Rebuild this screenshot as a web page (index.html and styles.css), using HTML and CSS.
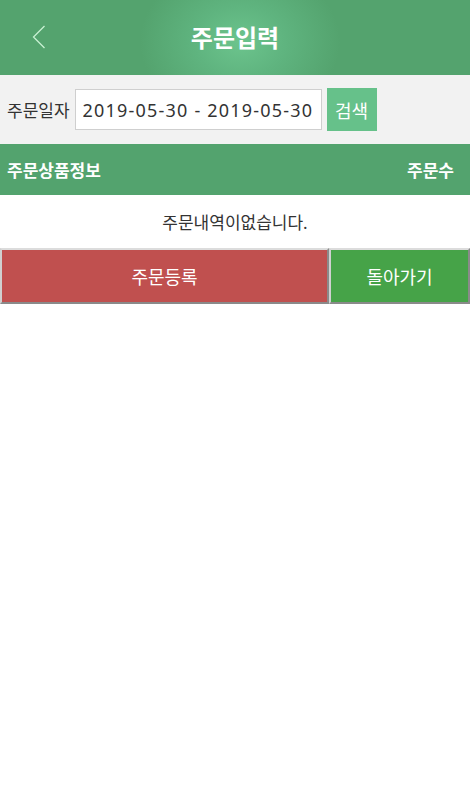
FILE: index.html
```html
<!DOCTYPE html>
<html lang="ko">
<head>
    <meta charset="UTF-8">
    <meta name="viewport" content="width=device-width, initial-scale=1.0">
    <title>주문입력</title>
    <link rel="stylesheet" href="styles.css">
</head>
<body>
    <div class="order-page">
        <header class="top-bar">
            <a class="back-btn" href="#">
                <svg width="14" height="26" viewBox="0 0 14 26">
                    <polyline points="12.5,1 1.5,12 12.5,23" fill="none" stroke="#c8f0d2" stroke-width="1.3"/>
                </svg>
            </a>
            <h1>주문입력</h1>
        </header>

        <div class="search-bar">
            <label for="orderDate">주문일자</label>
            <input type="text" id="orderDate" value="2019-05-30 - 2019-05-30">
            <button class="btn-search">검색</button>
        </div>

        <div class="list-head">
            <span>주문상품정보</span>
            <span>주문수</span>
        </div>
        <div class="list-empty">주문내역이없습니다.</div>

        <div class="actions">
            <button class="btn-order">주문등록</button>
            <button class="btn-back">돌아가기</button>
        </div>
    </div>
</body>
</html>
```

FILE: styles.css
```css
body {
    margin: 0;
    background: #ffffff;
    font-family: "Noto Sans", "Noto Sans CJK KR", sans-serif;
    color: #333;
}
.order-page {
    width: 470px;
}
.top-bar {
    position: relative;
    height: 75px;
    display: flex;
    align-items: center;
    justify-content: center;
    background: radial-gradient(ellipse 100px 80px at 240px 42px, #6cc48d 0%, #5fb47f 45%, #54a36e 100%);
}
.top-bar h1 {
    margin: 0;
    font-size: 24px;
    font-weight: bold;
    color: #ffffff;
    line-height: 1;
}
.back-btn {
    position: absolute;
    left: 32px;
    top: 25px;
    display: block;
    line-height: 0;
}
.search-bar {
    height: 69px;
    background: #f2f2f2;
    display: flex;
    align-items: center;
    padding: 0 7px;
    gap: 5px;
}
.search-bar label {
    font-size: 17px;
    color: #333;
}
.search-bar input {
    box-sizing: border-box;
    width: 247px;
    height: 41px;
    border: 1px solid #cfcfcf;
    background: #fff;
    padding: 0 7px;
    font-family: inherit;
    font-size: 18px;
    letter-spacing: 1.2px;
    color: #333;
    outline: none;
}
.btn-search {
    width: 50px;
    height: 43px;
    border: none;
    background: #66c18a;
    color: #ffffff;
    font-family: inherit;
    font-size: 18px;
    padding: 0;
}
.list-head {
    height: 51px;
    background: #53a36e;
    display: flex;
    align-items: center;
    justify-content: space-between;
    padding: 0 16px 0 7px;
    color: #fff;
    font-size: 17px;
    font-weight: bold;
}
.list-empty {
    height: 53px;
    display: flex;
    align-items: center;
    justify-content: center;
    font-size: 17px;
    color: #333;
}
.actions {
    display: flex;
    height: 56px;
}
.actions button {
    box-sizing: border-box;
    height: 100%;
    border: 2px solid;
    border-color: #dcdcdc #8a8a8a #8a8a8a #d0d0d0;
    color: #fff;
    font-family: inherit;
    font-size: 18px;
    padding: 0;
}
.btn-order {
    width: 329px;
    background: #c0504f;
}
.btn-back {
    width: 141px;
    background: #46a348;
}
```
